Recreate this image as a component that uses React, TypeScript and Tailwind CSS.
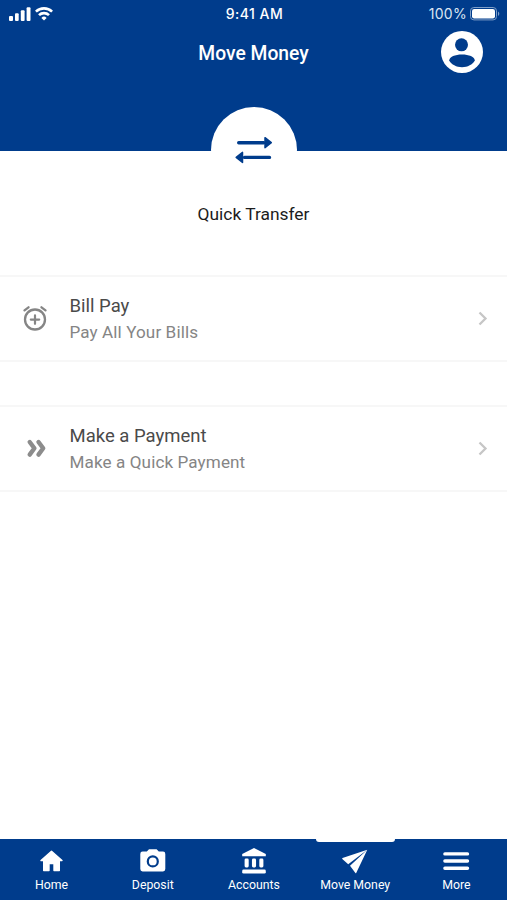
import type { ReactNode } from "react";

interface RowProps {
  icon: ReactNode;
  title: string;
  subtitle: string;
}

function SignalIcon() {
  return (
    <svg className="h-[14px] w-[22px]" viewBox="0 0 22 14" fill="currentColor">
      <rect x="0" y="9" width="4" height="5" rx="1" />
      <rect x="6" y="6.2" width="3.7" height="7.8" rx="1" />
      <rect x="11.8" y="3.2" width="3.8" height="10.8" rx="1" />
      <rect x="17.6" y="0.3" width="3.9" height="13.7" rx="1" />
    </svg>
  );
}

function WifiIcon() {
  return (
    <svg className="h-[14px] w-[18px]" viewBox="0 0 18 14" fill="none" stroke="currentColor" strokeWidth="2.6">
      <path d="M0.9 4.7a11.5 11.5 0 0 1 16.2 0" />
      <path d="M4 8.2a7.1 7.1 0 0 1 10 0" />
      <path d="M9 13.4l-2.6-2.5a3.6 3.6 0 0 1 5.2 0z" fill="currentColor" stroke="none" />
    </svg>
  );
}

function BatteryIcon() {
  return (
    <svg className="h-[14px] w-[30px]" viewBox="0 0 30 14">
      <rect x="0.5" y="0.5" width="26" height="12.4" rx="3.4" fill="none" stroke="#7f9fc8" strokeWidth="1" />
      <rect x="2" y="2" width="23" height="9.4" rx="2.2" fill="#fff" />
      <path d="M28 4.5c1.8.8 1.8 3.6 0 4.4z" fill="#7f9fc8" />
    </svg>
  );
}

function ProfileIcon() {
  return (
    <svg className="h-[42px] w-[42px]" viewBox="0 0 42 42">
      <circle cx="21" cy="21" r="21" fill="#fff" />
      <circle cx="20.5" cy="13.8" r="6.5" fill="#003c8c" />
      <path d="M8.2 29.6c0-3.7 6-6 12.8-6s12.8 2.3 12.8 6c-2.2 4-7.2 6.7-12.8 6.7S10.4 33.6 8.2 29.600z" fill="#003c8c" />
    </svg>
  );
}

function TransferIcon() {
  return (
    <svg className="h-[28px] w-[38px]" viewBox="0 0 38 28" fill="#003c8c" stroke="#003c8c" strokeLinecap="round" strokeLinejoin="round">
      <path d="M3.7 6.7h25M9.5 21.4h25" fill="none" strokeWidth="3.4" />
      <path d="M30 1.7v10l6.3-5zM7.5 16.4v10l-6.3-5z" strokeWidth="1.5" />
    </svg>
  );
}

function AlarmPlusIcon() {
  return (
    <svg className="h-[26px] w-[26px]" viewBox="0 0 26 26" fill="none" stroke="#858585" strokeWidth="2.3" strokeLinecap="round">
      <circle cx="13" cy="13.5" r="10" />
      <path d="M13 9.4v8.4M8.8 13.6h8.4" strokeWidth="2.2" />
      <path d="M2.5 4.3l4-3M23.5 4.3l-4-3" />
    </svg>
  );
}

function DoubleChevronIcon() {
  return (
    <svg className="h-[26px] w-[26px]" viewBox="0 0 26 26" fill="none" stroke="#8c8c8c" strokeWidth="4.4">
      <path d="M7.7 6l4.7 6.3-4.7 6.3M16.5 6l4.700 6.300-4.700 6.300" strokeLinecap="round" strokeLinejoin="round" />
    </svg>
  );
}

function HomeIcon() {
  return (
    <svg className="h-[28px] w-[28px]" viewBox="0 0 28 28" fill="currentColor" stroke="currentColor" strokeLinejoin="round">
      <path d="M13.500 4.200L3 13.600H5.700v9.900h5.300v-7h5v7h5.300v-9.900h2.700z" strokeWidth="1.4" />
    </svg>
  );
}

function CameraIcon() {
  return (
    <svg className="h-[28px] w-[28px]" viewBox="0 0 28 28">
      <path d="M10 2.200h7.600l2.200 2.400h4.200a2.300 2.300 0 0 1 2.300 2.300v15.200a2.300 2.300 0 0 1-2.300 2.300H3.600a2.300 2.300 0 0 1-2.300-2.300V6.900A2.300 2.300 0 0 1 3.600 4.600h4.200z" fill="currentColor" />
      <circle cx="13.800" cy="14.400" r="5" fill="none" stroke="#003c8c" strokeWidth="2.2" />
    </svg>
  );
}

function BankIcon() {
  return (
    <svg className="h-[28px] w-[28px]" viewBox="0 0 28 28" fill="currentColor">
      <path d="M14 1l11.300 5.700q.5.3.5.8v1.700H2.200V7.500q0-.5.5-.8z" />
      <rect x="4.6" y="11.5" width="4.1" height="9" rx="1.4" />
      <rect x="11.95" y="11.5" width="4.1" height="9" rx="1.4" />
      <rect x="19.3" y="11.5" width="4.1" height="9" rx="1.4" />
      <rect x="2.2" y="22.6" width="23.6" height="4" rx="1.4" />
    </svg>
  );
}

function PlaneIcon() {
  return (
    <svg className="h-[28px] w-[28px]" viewBox="0 0 28 28" fill="currentColor">
      <path d="M26.300 2.800L1.500 11.100q-.6.300-.2.900l5.900 5.200zM26.300 2.800L9 18.800l5.400 7.200q.5.4.8-.1z" />
    </svg>
  );
}

function MenuIcon() {
  return (
    <svg className="h-[28px] w-[28px]" viewBox="0 0 28 28" stroke="currentColor" strokeWidth="3.4" strokeLinecap="round">
      <path d="M2.9 6.900h22.600M2.900 14h22.600M2.900 21.200h22.600" />
    </svg>
  );
}

function ActionRow({ icon, title, subtitle }: RowProps) {
  return (
    <button className="flex h-[87px] w-full items-center border-y-2 border-[#f7f7f7] bg-white pr-[18px] pl-[22px] text-left">
      {icon}
      <span className="ml-[21.5px] flex-1 pt-px">
        <span className="block text-[18.5px] leading-[26px] text-[#4a4a4a]">{title}</span>
        <span className="block text-[17.1px] leading-[26px] tracking-[0.1px] text-[#858585]">{subtitle}</span>
      </span>
      <svg className="h-[16px] w-[12px]" viewBox="0 0 12 16" fill="none" stroke="#c6c6c6" strokeWidth="2.3">
        <path d="M2.5 1.5l6 6-6 6" />
      </svg>
    </button>
  );
}

const tabs = [
  { label: "Home", icon: <HomeIcon /> },
  { label: "Deposit", icon: <CameraIcon /> },
  { label: "Accounts", icon: <BankIcon /> },
  { label: "Move Money", icon: <PlaneIcon />, active: true },
  { label: "More", icon: <MenuIcon /> },
];

export default function App() {
  return (
    <div className="flex h-[900px] w-[507px] flex-col overflow-hidden bg-white font-[Roboto,sans-serif]">
      <header className="h-[151px] shrink-0 bg-[#003c8c] text-white">
        {/* Status bar */}
        <div className="grid h-[27px] grid-cols-3 items-center pr-[7px] pl-[9px] font-[Inter,sans-serif] text-[14px]">
          <div className="flex gap-1">
            <SignalIcon />
            <WifiIcon />
          </div>
          <div className="pb-px text-center font-medium tracking-[0.5px]">9:41 AM</div>
          <div className="flex items-center justify-end gap-[3px]">
            <span className="pb-px tracking-[0.3px] text-[#dce6f2]">100%</span>
            <BatteryIcon />
          </div>
        </div>
        <div className="grid grid-cols-[1fr_auto_1fr] items-center pt-1 pr-[24px] pl-[24px]">
          <span />
          <h1 className="pt-[4px] text-[19.3px] font-medium">Move Money</h1>
          <button className="justify-self-end">
            <ProfileIcon />
          </button>
        </div>
      </header>

      <main className="flex-1">
        {/* Quick transfer overlaps the header edge */}
        <button className="relative mx-auto -mt-[44px] flex w-[160px] flex-col items-center">
          <span className="flex h-[86px] w-[86px] items-center justify-center rounded-full bg-white">
            <TransferIcon />
          </span>
          <span className="mt-[8px] text-[17.4px] leading-[26px] text-[#1c1c1c]">Quick Transfer</span>
        </button>
        <div className="mt-[48px] flex flex-col gap-[43px]">
          <ActionRow icon={<AlarmPlusIcon />} title="Bill Pay" subtitle="Pay All Your Bills" />
          <ActionRow icon={<DoubleChevronIcon />} title="Make a Payment" subtitle="Make a Quick Payment" />
        </div>
      </main>

      <nav className="grid h-[61px] shrink-0 grid-cols-5 bg-[#003c8c] pl-[1px] text-white">
        {tabs.map((tab) => (
          <button key={tab.label} className="flex flex-col items-center">
            <span className={`h-[3px] w-[79px] rounded-b-[3px] ${tab.active ? "bg-white" : ""}`} />
            <span className="mt-[5px]">{tab.icon}</span>
            <span className="mt-[2px] text-[12.3px] leading-[16px]">{tab.label}</span>
          </button>
        ))}
      </nav>
    </div>
  );
}
